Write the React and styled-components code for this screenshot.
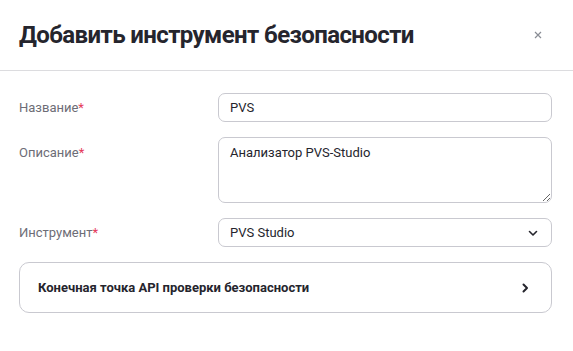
import React from 'react';
import styled, { createGlobalStyle } from 'styled-components';

const GlobalStyle = createGlobalStyle`
    html, body {
        margin: 0;
        padding: 0;
        background: #fff;
    }
    body {
        font-family: Roboto, "Liberation Sans", Arial, sans-serif;
        color: #2b2b33;
    }
`;

/** Layout **/
const Modal = styled.div`
    width: 573px;
    height: 351px;
    background: #fff;
    display: flex;
    flex-direction: column;
`;

const Header = styled.header`
    display: flex;
    align-items: center;
    justify-content: space-between;
    height: 71px;
    padding: 0 31px 0 19px;
    box-sizing: border-box;
    border-bottom: 1px solid #dcdcdf;
`;

const Title = styled.h1`
    margin: 0;
    font-size: 24px;
    font-weight: 700;
    letter-spacing: -0.6px;
    color: #25252d;
`;

const CloseButton = styled.button`
    border: 0;
    background: none;
    padding: 0;
    display: flex;
    cursor: pointer;
`;

const Body = styled.div`
    display: flex;
    flex-direction: column;
    gap: 15px;
    padding: 22px 21px 0 19px;
`;

const Field = styled.div`
    display: grid;
    grid-template-columns: 199px 1fr;
    align-items: ${props => props.top ? 'start' : 'center'};
`;

const Label = styled.label`
    font-size: 13px;
    color: #6d6d76;
    padding-top: ${props => props.top ? '8px' : '0'};
`;

const Star = styled.span`
    color: #e5395a;
`;

const Input = styled.input`
    height: 29px;
    box-sizing: border-box;
    border: 1px solid #c9c9d0;
    border-radius: 7px;
    padding: 0 11px;
    font: inherit;
    font-size: 13px;
    color: #25252d;
    outline: none;
`;

const TextArea = styled.textarea`
    height: 66px;
    box-sizing: border-box;
    border: 1px solid #c9c9d0;
    border-radius: 7px;
    padding: 7px 11px;
    font: inherit;
    font-size: 13px;
    color: #25252d;
    outline: none;
    resize: vertical;
`;

const SelectBox = styled.div`
    height: 29px;
    box-sizing: border-box;
    border: 1px solid #c9c9d0;
    border-radius: 7px;
    padding: 0 12px 0 11px;
    display: flex;
    align-items: center;
    justify-content: space-between;
    font-size: 13px;
    color: #25252d;
`;

const Accordion = styled.div`
    height: 51px;
    box-sizing: border-box;
    border: 1px solid #c9c9d0;
    border-radius: 10px;
    padding: 0 20px 0 18px;
    display: flex;
    align-items: center;
    justify-content: space-between;
`;

const AccordionTitle = styled.span`
    font-size: 13px;
    font-weight: 700;
    color: #25252d;
`;

const Chevron = ({ dir }) => (
    <svg width="12" height="12" viewBox="0 0 12 12" fill="none" stroke="#25252d"
        strokeWidth={dir === 'right' ? 2 : 1.6} strokeLinecap="round" strokeLinejoin="round">
        {dir === 'right'
            ? <path d="M4.5 2.5 L8 6 L4.5 9.5" />
            : <path d="M2.5 4.5 L6 8 L9.5 4.5" />}
    </svg>
);

export default function App() {
    return (
        <>
            <GlobalStyle />
            <Modal>
                <Header>
                    <Title>Добавить инструмент безопасности</Title>
                    <CloseButton aria-label="Закрыть">
                        <svg width="8" height="8" viewBox="0 0 8 8" stroke="#8a8d95" strokeWidth="1.2">
                            <path d="M1 1 L7 7 M7 1 L1 7" />
                        </svg>
                    </CloseButton>
                </Header>
                <Body>
                    <Field>
                        <Label>Название<Star>*</Star></Label>
                        <Input defaultValue="PVS" />
                    </Field>
                    <Field top>
                        <Label top>Описание<Star>*</Star></Label>
                        <TextArea defaultValue="Анализатор PVS-Studio" />
                    </Field>
                    <Field>
                        <Label>Инструмент<Star>*</Star></Label>
                        <SelectBox>
                            <span>PVS Studio</span>
                            <Chevron dir="down" />
                        </SelectBox>
                    </Field>
                    <Accordion>
                        <AccordionTitle>Конечная точка API проверки безопасности</AccordionTitle>
                        <Chevron dir="right" />
                    </Accordion>
                </Body>
            </Modal>
        </>
    );
}
